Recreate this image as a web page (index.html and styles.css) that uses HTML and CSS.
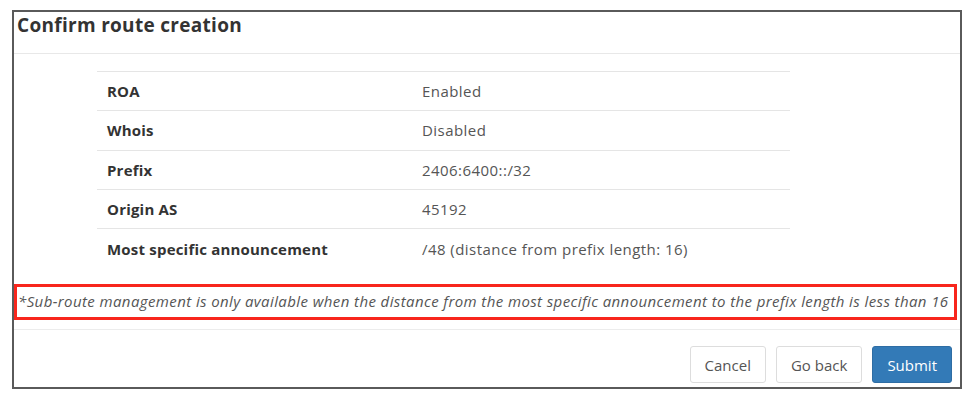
FILE: index.html
```html
<!DOCTYPE html>
<html lang="en">

<head>
    <meta charset="UTF-8">
    <meta name="viewport" content="width=device-width, initial-scale=1.0">
    <title>Confirm route creation</title>
    <link rel="stylesheet" href="styles.css">
</head>

<body>

    <div class="modal">

        <!-- Header -->
        <div class="modal-header">
            <h4 class="modal-title">Confirm route creation</h4>
        </div>

        <!-- Body -->
        <div class="modal-body">
            <table class="summary">
                <tr>
                    <th>ROA</th>
                    <td>Enabled</td>
                </tr>
                <tr>
                    <th>Whois</th>
                    <td>Disabled</td>
                </tr>
                <tr>
                    <th>Prefix</th>
                    <td>2406:6400::/32</td>
                </tr>
                <tr>
                    <th>Origin AS</th>
                    <td>45192</td>
                </tr>
                <tr>
                    <th>Most specific announcement</th>
                    <td>/48 (distance from prefix length: 16)</td>
                </tr>
            </table>

            <p class="note">*Sub-route management is only available when the distance from the most specific announcement to the prefix length is less than 16</p>
        </div>

        <!-- Footer -->
        <div class="modal-footer">
            <button class="btn">Cancel</button>
            <button class="btn">Go back</button>
            <button class="btn btn-primary">Submit</button>
        </div>

    </div>

</body>

</html>
```

FILE: styles.css
```css
* {
    margin: 0;
    padding: 0;
    box-sizing: border-box;
}

body {
    background: #fff;
    font-family: "Open Sans", sans-serif;
    color: #333;
}

/* Modal box */
.modal {
    width: 950px;
    height: 379px;
    margin: 10px 0 0 12px;
    border: 2px solid #5a5a5a;
    display: flex;
    flex-direction: column;
}

.modal-header {
    height: 42px;
    padding: 2px 0 0 3px;
    border-bottom: 1px solid #e8e8e8;
}

.modal-title {
    font-size: 19px;
    font-weight: 700;
    letter-spacing: 0.3px;
    color: #333;
    line-height: 22px;
}

.modal-body {
    flex: 1;
    padding: 17px 3px 0 0;
}

/* Summary table */
.summary {
    margin-left: 83px;
    width: 693px;
    border-collapse: collapse;
    font-size: 15px;
}

.summary tr {
    border-top: 1px solid #e5e5e5;
    height: 39.3px;
}

.summary th {
    width: 325px;
    padding-left: 10px;
    text-align: left;
    font-weight: 700;
    letter-spacing: 0.2px;
    color: #333;
}

.summary td {
    color: #555;
    letter-spacing: 0.45px;
}

/* Note */
.note {
    margin-top: 16px;
    height: 36px;
    border: 3px solid #f8261d;
    padding-left: 1px;
    font-size: 15px;
    font-style: italic;
    letter-spacing: 0.4px;
    color: #555;
    line-height: 29px;
    white-space: nowrap;
}

/* Footer */
.modal-footer {
    height: 58px;
    border-top: 1px solid #ececec;
    display: flex;
    justify-content: flex-end;
    align-items: flex-start;
    gap: 10px;
    padding: 16px 8px 0 0;
}

.btn {
    height: 37px;
    padding: 0 14px;
    font-family: "Open Sans", sans-serif;
    font-size: 15px;
    color: #555;
    background: #fff;
    border: 1px solid #ddd;
    border-radius: 3px;
}

.btn-primary {
    color: #fff;
    background: #337ab7;
    border-color: #2e6da4;
}
```
